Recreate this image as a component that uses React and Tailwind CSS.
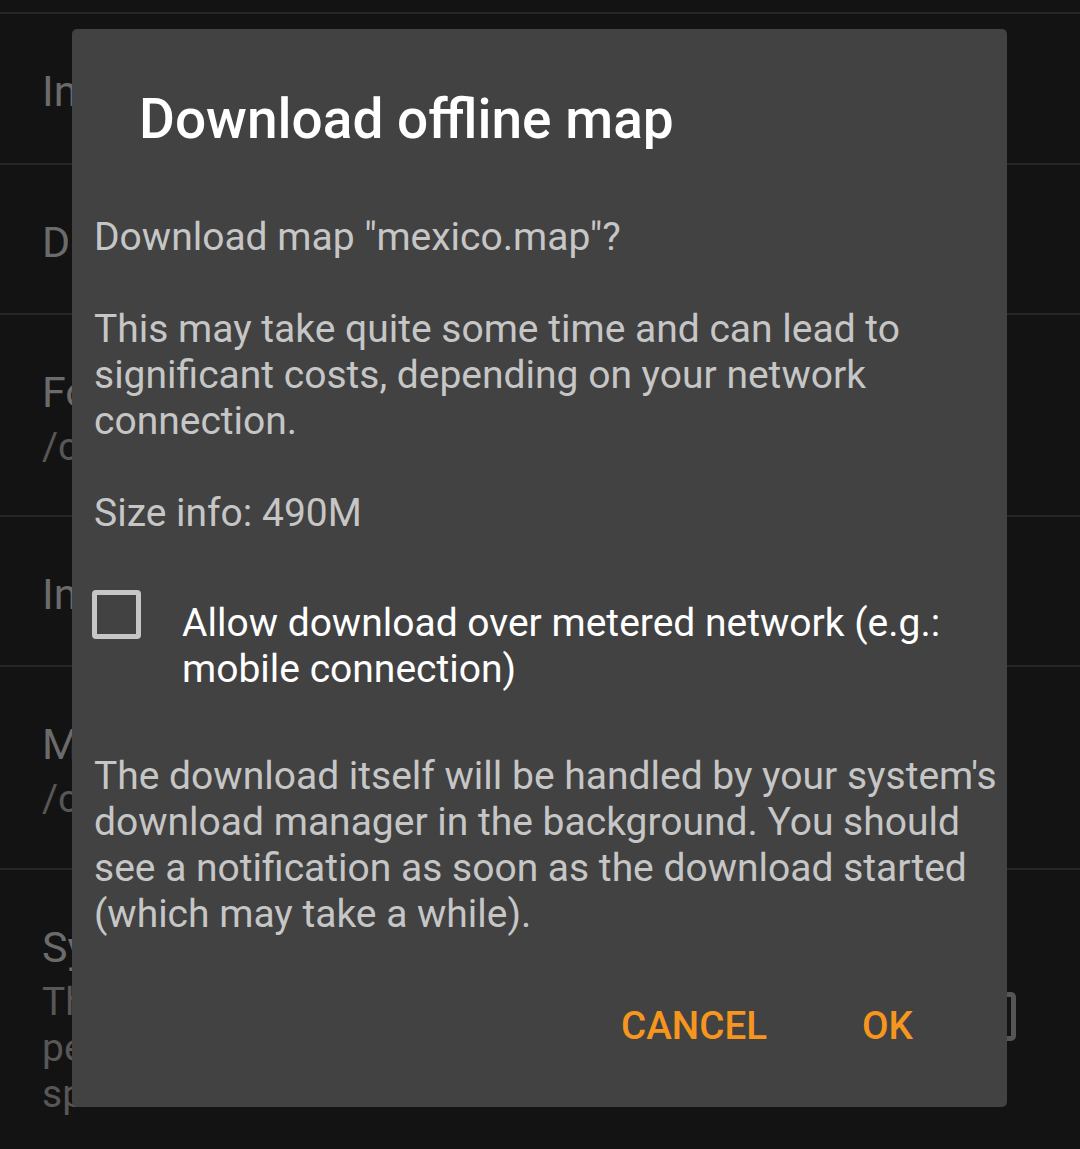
import React from "react";

const rows = [
  { h: "h-[149px]", title: "Info about offline maps" },
  { h: "h-[148px]", title: "Download offline maps" },
  { h: "h-[200px]", title: "Folder for offline maps", summary: ["/content/storage/maps"] },
  { h: "h-[148px]", title: "Info about map themes" },
  { h: "h-[201px]", title: "Map themes folder", summary: ["/content/storage/themes"] },
];

const Divider = () => <div className="h-[2px] bg-[#262626]" />;

const App = () => {
  return (
    <div
      className="relative w-[1080px] h-[1149px] overflow-hidden bg-[#131313]"
      style={{ fontFamily: "Roboto, 'Noto Sans', sans-serif" }}
    >
      {/* settings list behind the dialog */}
      <div className="h-[12px]" />
      <Divider />
      {rows.map((row) => (
        <div key={row.title}>
          <div className={`${row.h} pl-[42px] pt-[52px]`}>
            <div className="text-[43px] leading-[50px] text-[#6b6b6b]">{row.title}</div>
            {row.summary &&
              row.summary.map((s) => (
                <div key={s} className="mt-[7px] text-[39px] leading-[46px] text-[#575757]">
                  {s}
                </div>
              ))}
          </div>
          <Divider />
        </div>
      ))}
      <div className="flex items-start pl-[42px] pt-[52px] pr-[64px]">
        <div className="flex-1">
          <div className="text-[43px] leading-[50px] text-[#6b6b6b]">Sync map themes</div>
          <div className="mt-[7px] text-[39px] leading-[46px] text-[#575757]">
            This keeps a copy of the themes in
            <br />
            permanent app storage to improve
            <br />
            space.
          </div>
        </div>
        <div className="mt-[70px] w-[48px] h-[49px] rounded-[5px] border-[5px] border-[#555555]" />
      </div>

      {/* dialog */}
      <div className="absolute left-[72px] top-[29px] w-[935px] h-[1078px] rounded-[5px] bg-[#424242] flex flex-col">
        <div className="pl-[67px] pt-[58px] text-[55px] leading-[64px] font-medium text-white">
          Download offline map
        </div>

        <div className="mt-[63px] pl-[22px] text-[39px] leading-[46px] text-[#c6c6c6] whitespace-nowrap">
          <div>Download map "mexico.map"?</div>
          <div className="mt-[46px]">
            This may take quite some time and can lead to
            <br />
            significant costs, depending on your network
            <br />
            connection.
          </div>
          <div className="mt-[46px]">Size info: 490M</div>
        </div>

        <div className="mt-[54px] pl-[20px] flex items-start">
          <div className="w-[49px] h-[49px] shrink-0 rounded-[4px] border-[5px] border-[#c6c6c6]" />
          <div className="ml-[41px] pt-[10px] text-[39px] leading-[46px] text-white whitespace-nowrap">
            Allow download over metered network (e.g.:
            <br />
            mobile connection)
          </div>
        </div>

        <div className="mt-[61px] pl-[22px] text-[39px] leading-[46px] text-[#c6c6c6] whitespace-nowrap">
          The download itself will be handled by your system's
          <br />
          download manager in the background. You should
          <br />
          see a notification as soon as the download started
          <br />
          (which may take a while).
        </div>

        <div className="mt-[66px] flex justify-end gap-[95px] pr-[94px] text-[38.6px] leading-[45px] font-medium text-[#f7961e]">
          <span>CANCEL</span>
          <span>OK</span>
        </div>
      </div>
    </div>
  );
};

export default App;
